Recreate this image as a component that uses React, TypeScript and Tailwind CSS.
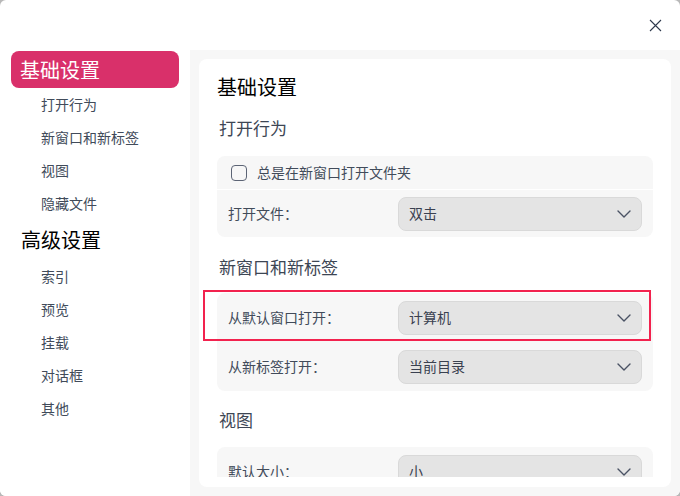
import React from "react";

const font = { fontFamily: '"Noto Sans CJK SC", "Noto Sans", sans-serif' };

function Chevron() {
  return (
    <svg width="14" height="8" viewBox="0 0 14 8" fill="none">
      <path d="M1 1L7 7L13 1" stroke="#4a5264" strokeWidth="1.4" strokeLinecap="round" strokeLinejoin="round" />
    </svg>
  );
}

function Select({ value }: { value: string }) {
  return (
    <div className="w-[244px] h-[34px] rounded-[8px] bg-[#e4e4e4] border border-[#d9d9d9] flex items-center justify-between pl-[10px] pr-[10px] shrink-0">
      <span className="text-[14px] text-[#3a4150]">{value}</span>
      <Chevron />
    </div>
  );
}

function SelectRow({ label, value, h }: { label: string; value: string; h: string }) {
  return (
    <div className={`flex items-center px-[11px] ${h}`}>
      <span className="flex-1 text-[14px] text-[#414b5a]">{label}</span>
      <Select value={value} />
    </div>
  );
}

export default function App() {
  const sub1 = ["打开行为", "新窗口和新标签", "视图", "隐藏文件"];
  const sub2 = ["索引", "预览", "挂载", "对话框", "其他"];
  return (
    <div className="w-[680px] h-[496px] bg-[#b8b8b8]" style={font}>
      <div className="w-full h-full bg-white rounded-[6px] overflow-hidden flex flex-col">
        <div className="h-[50px] shrink-0 flex items-center justify-end pr-[18px]">
          <svg width="13" height="13" viewBox="0 0 13 13" fill="none">
            <path d="M1 1L12 12M12 1L1 12" stroke="#2f3a4d" strokeWidth="1.1" />
          </svg>
        </div>
        <div className="flex flex-1 min-h-0">
          <div className="w-[190px] shrink-0 bg-white pt-px">
            <div className="ml-[11px] w-[168px] h-[37px] rounded-[8px] bg-[#d9306a] flex items-center pl-[9px] text-white text-[20px]">
              基础设置
            </div>
            {sub1.map((s) => (
              <div key={s} className="h-[33px] flex items-center pl-[41px] text-[14px] text-[#414b5a]">
                {s}
              </div>
            ))}
            <div className="h-[40px] flex items-center pl-[21px] text-[20px] text-black">高级设置</div>
            {sub2.map((s) => (
              <div key={s} className="h-[33px] flex items-center pl-[41px] text-[14px] text-[#414b5a]">
                {s}
              </div>
            ))}
          </div>
          <div className="flex-1 bg-[#f7f7f7] p-[9px]">
            <div className="h-full bg-white rounded-[8px] pb-[10px] flex flex-col">
              <div className="flex-1 min-h-0 overflow-hidden px-[18px] pt-[14px]">
                <div className="h-[28px] flex items-center text-[20px] text-black leading-[28px]">基础设置</div>
                <div className="mt-[15px] h-[24px] flex items-center pl-[2px] text-[17px] text-[#3d4654]">打开行为</div>
                <div className="mt-[16px] bg-[#f7f7f7] rounded-[8px] overflow-hidden">
                  <div className="h-[33px] flex items-center pl-[14px] gap-[10px]">
                    <div className="w-[16px] h-[16px] rounded-[4px] border-[1.5px] border-[#5c6475] bg-[#f7f7f7]" />
                    <span className="text-[14px] text-[#414b5a]">总是在新窗口打开文件夹</span>
                  </div>
                  <div className="h-px bg-white" />
                  <SelectRow label="打开文件：" value="双击" h="h-[47px]" />
                </div>
                <div className="mt-[18px] h-[24px] flex items-center pl-[2px] text-[17px] text-[#3d4654]">新窗口和新标签</div>
                <div className="mt-[14px] bg-[#f7f7f7] rounded-[8px] relative">
                  <SelectRow label="从默认窗口打开：" value="计算机" h="h-[49px]" />
                  <SelectRow label="从新标签打开：" value="当前目录" h="h-[49px]" />
                  <div className="absolute left-[-14px] top-[-3px] w-[448px] h-[51px] border-2 border-[#f2224e] pointer-events-none" />
                </div>
                <div className="mt-[17px] h-[24px] flex items-center pl-[2px] text-[17px] text-[#3d4654]">视图</div>
                <div className="mt-[15px] bg-[#f7f7f7] rounded-[8px]">
                  <SelectRow label="默认大小：" value="小" h="h-[49px]" />
                </div>
              </div>
            </div>
          </div>
        </div>
      </div>
    </div>
  );
}
